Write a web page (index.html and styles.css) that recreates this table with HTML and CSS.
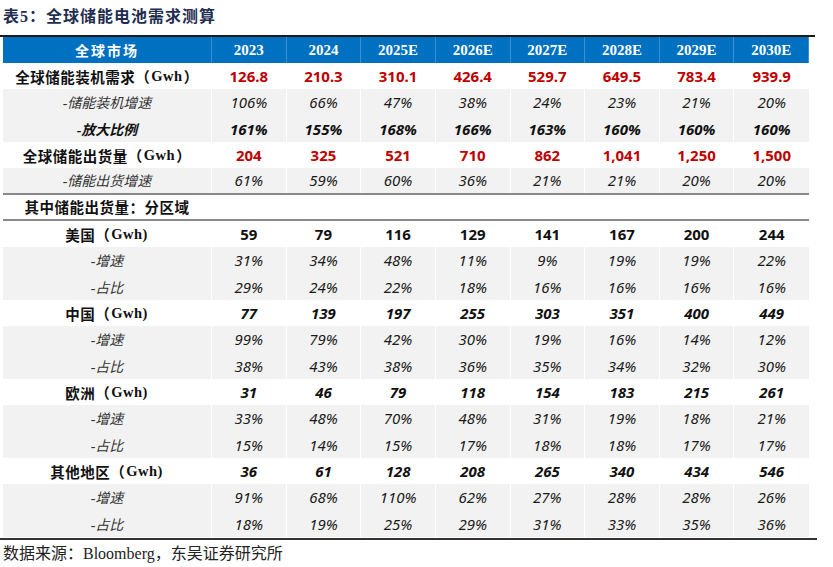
FILE: index.html
```html
<!DOCTYPE html>
<html lang="zh">
<head>
<meta charset="utf-8">
<title>表5：全球储能电池需求测算</title>
<link rel="stylesheet" href="styles.css">
</head>
<body>
<div class="page">
  <div class="title">表5：全球储能电池需求测算</div>
  <div class="table">
    <div class="row head">
      <div class="cell lab">全球市场</div>
      <div class="cell">2023</div><div class="cell">2024</div><div class="cell">2025E</div><div class="cell">2026E</div>
      <div class="cell">2027E</div><div class="cell">2028E</div><div class="cell">2029E</div><div class="cell">2030E</div>
    </div>
    <div class="row w main red">
      <div class="cell lab">全球储能装机需求（<span class="lat">Gwh</span>）</div>
      <div class="cell">126.8</div><div class="cell">210.3</div><div class="cell">310.1</div><div class="cell">426.4</div>
      <div class="cell">529.7</div><div class="cell">649.5</div><div class="cell">783.4</div><div class="cell">939.9</div>
    </div>
    <div class="row g sub">
      <div class="cell lab">-储能装机增速</div>
      <div class="cell">106%</div><div class="cell">66%</div><div class="cell">47%</div><div class="cell">38%</div>
      <div class="cell">24%</div><div class="cell">23%</div><div class="cell">21%</div><div class="cell">20%</div>
    </div>
    <div class="row g sub strong">
      <div class="cell lab">-放大比例</div>
      <div class="cell">161%</div><div class="cell">155%</div><div class="cell">168%</div><div class="cell">166%</div>
      <div class="cell">163%</div><div class="cell">160%</div><div class="cell">160%</div><div class="cell">160%</div>
    </div>
    <div class="row w main red">
      <div class="cell lab">全球储能出货量（<span class="lat">Gwh</span>）</div>
      <div class="cell">204</div><div class="cell">325</div><div class="cell">521</div><div class="cell">710</div>
      <div class="cell">862</div><div class="cell">1,041</div><div class="cell">1,250</div><div class="cell">1,500</div>
    </div>
    <div class="row g sub sep">
      <div class="cell lab">-储能出货增速</div>
      <div class="cell">61%</div><div class="cell">59%</div><div class="cell">60%</div><div class="cell">36%</div>
      <div class="cell">21%</div><div class="cell">21%</div><div class="cell">20%</div><div class="cell">20%</div>
    </div>
    <div class="row w main sep">
      <div class="cell lab">其中储能出货量：分区域</div>
      <div class="cell"></div><div class="cell"></div><div class="cell"></div><div class="cell"></div>
      <div class="cell"></div><div class="cell"></div><div class="cell"></div><div class="cell"></div>
    </div>
    <div class="row w main">
      <div class="cell lab">美国（<span class="lat">Gwh)</span></div>
      <div class="cell">59</div><div class="cell">79</div><div class="cell">116</div><div class="cell">129</div>
      <div class="cell">141</div><div class="cell">167</div><div class="cell">200</div><div class="cell">244</div>
    </div>
    <div class="row g sub">
      <div class="cell lab">-增速</div>
      <div class="cell">31%</div><div class="cell">34%</div><div class="cell">48%</div><div class="cell">11%</div>
      <div class="cell">9%</div><div class="cell">19%</div><div class="cell">19%</div><div class="cell">22%</div>
    </div>
    <div class="row g sub">
      <div class="cell lab">-占比</div>
      <div class="cell">29%</div><div class="cell">24%</div><div class="cell">22%</div><div class="cell">18%</div>
      <div class="cell">16%</div><div class="cell">16%</div><div class="cell">16%</div><div class="cell">16%</div>
    </div>
    <div class="row w main ital">
      <div class="cell lab">中国（<span class="lat">Gwh)</span></div>
      <div class="cell">77</div><div class="cell">139</div><div class="cell">197</div><div class="cell">255</div>
      <div class="cell">303</div><div class="cell">351</div><div class="cell">400</div><div class="cell">449</div>
    </div>
    <div class="row g sub">
      <div class="cell lab">-增速</div>
      <div class="cell">99%</div><div class="cell">79%</div><div class="cell">42%</div><div class="cell">30%</div>
      <div class="cell">19%</div><div class="cell">16%</div><div class="cell">14%</div><div class="cell">12%</div>
    </div>
    <div class="row g sub">
      <div class="cell lab">-占比</div>
      <div class="cell">38%</div><div class="cell">43%</div><div class="cell">38%</div><div class="cell">36%</div>
      <div class="cell">35%</div><div class="cell">34%</div><div class="cell">32%</div><div class="cell">30%</div>
    </div>
    <div class="row w main ital">
      <div class="cell lab">欧洲（<span class="lat">Gwh)</span></div>
      <div class="cell">31</div><div class="cell">46</div><div class="cell">79</div><div class="cell">118</div>
      <div class="cell">154</div><div class="cell">183</div><div class="cell">215</div><div class="cell">261</div>
    </div>
    <div class="row g sub">
      <div class="cell lab">-增速</div>
      <div class="cell">33%</div><div class="cell">48%</div><div class="cell">70%</div><div class="cell">48%</div>
      <div class="cell">31%</div><div class="cell">19%</div><div class="cell">18%</div><div class="cell">21%</div>
    </div>
    <div class="row g sub">
      <div class="cell lab">-占比</div>
      <div class="cell">15%</div><div class="cell">14%</div><div class="cell">15%</div><div class="cell">17%</div>
      <div class="cell">18%</div><div class="cell">18%</div><div class="cell">17%</div><div class="cell">17%</div>
    </div>
    <div class="row w main ital">
      <div class="cell lab">其他地区（<span class="lat">Gwh)</span></div>
      <div class="cell">36</div><div class="cell">61</div><div class="cell">128</div><div class="cell">208</div>
      <div class="cell">265</div><div class="cell">340</div><div class="cell">434</div><div class="cell">546</div>
    </div>
    <div class="row g sub">
      <div class="cell lab">-增速</div>
      <div class="cell">91%</div><div class="cell">68%</div><div class="cell">110%</div><div class="cell">62%</div>
      <div class="cell">27%</div><div class="cell">28%</div><div class="cell">28%</div><div class="cell">26%</div>
    </div>
    <div class="row g sub">
      <div class="cell lab">-占比</div>
      <div class="cell">18%</div><div class="cell">19%</div><div class="cell">25%</div><div class="cell">29%</div>
      <div class="cell">31%</div><div class="cell">33%</div><div class="cell">35%</div><div class="cell">36%</div>
    </div>
  </div>
  <div class="endline"></div>
  <div class="source">数据来源：Bloomberg，东吴证券研究所</div>
</div>
</body>
</html>
```

FILE: styles.css
```css
html, body {
  margin: 0;
  padding: 0;
  background: #ffffff;
}

.page {
  width: 833px;
  font-family: "Noto Sans", "Noto Sans CJK SC", sans-serif;
  color: #111111;
}

.title {
  width: 815px;
  height: 37px;
  box-sizing: border-box;
  padding-left: 3px;
  padding-top: 6px;
  border-bottom: 2px solid #1a1a1a;
  font-family: "Liberation Serif", "Noto Sans CJK SC", serif;
  font-weight: bold;
  font-size: 16px;
  letter-spacing: 1px;
  line-height: 22px;
  color: #1f2d4f;
}

.table {
  margin-left: 3px;
  width: 806px;
}

.row {
  display: grid;
  grid-template-columns: 209px repeat(8, 1fr);
  height: 26.33px;
  box-sizing: border-box;
}

.row.w { background: #ffffff; }
.row.g { background: #f2f2f2; }

.cell {
  display: flex;
  align-items: center;
  justify-content: center;
  border-right: 1px solid #ffffff;
  font-size: 15px;
  white-space: nowrap;
}
.cell:last-child { border-right: none; }

.row.head {
  height: 26px;
  background: #0070c0;
  color: #ffffff;
  font-family: "Liberation Serif", "Noto Sans CJK SC", serif;
  font-weight: bold;
}
.row.head .cell {
  border-right: 1px solid #3d8fcf;
  font-size: 15px;
}
.row.head .cell.lab {
  font-size: 14px;
  letter-spacing: 2px;
}

.lab {
  font-family: "Liberation Serif", "Noto Sans CJK SC", serif;
  font-size: 14.5px;
}

.lat {
  font-family: "Liberation Serif", serif;
  font-weight: bold;
  padding: 0 1px;
}

.main { font-weight: bold; }
.main .lab { font-weight: bold; letter-spacing: 0.5px; }

.red .cell { color: #c00000; }
.red .cell.lab { color: #111111; }

.ital .cell { font-style: italic; }
.ital .cell.lab { font-style: normal; }

.sub .cell {
  font-style: italic;
  font-weight: normal;
  color: #1a1a1a;
}
.sub .cell.lab {
  font-size: 14px;
  color: #333333;
}
.sub.strong .cell { font-weight: bold; color: #111111; }
.sub.strong .cell.lab { font-weight: bold; }

.row.sep {
  border-bottom: 2px solid #8a8a8a;
}

.endline {
  width: 817px;
  height: 2px;
  margin-top: 1px;
  background: #333333;
}

.source {
  padding-left: 3px;
  padding-top: 4px;
  font-family: "Liberation Serif", "Noto Sans CJK SC", serif;
  font-size: 16px;
  line-height: 20px;
  color: #222222;
}
```
